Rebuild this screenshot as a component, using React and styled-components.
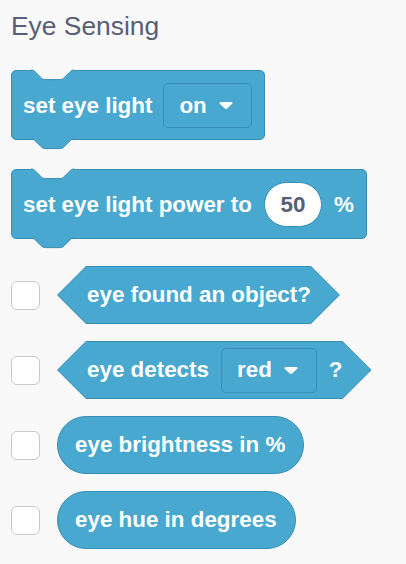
import styled, { createGlobalStyle } from 'styled-components'

const GlobalStyle = createGlobalStyle`
  body {
    margin: 0;
    background: #f9f9f9;
    font-family: "Liberation Sans", Arial, sans-serif;
  }
`

const Palette = styled.div`
  display: flex;
  flex-direction: column;
  align-items: flex-start;
  padding: 11px;
`
const Title = styled.h2`
  margin: 0 0 29px;
  font-size: 26.4px;
  line-height: 30px;
  font-weight: normal;
  color: #575e75;
`
const Stack = styled.div`
  position: relative;
  display: flex;
  align-items: center;
  gap: ${(p) => p.$gap || 12}px;
  padding: 12px 12px 11px 11px;
  margin-bottom: ${(p) => p.$mb || 0}px;
  background: #48a8cf;
  border: 1px solid #3a8db4;
  border-radius: 5px;
`
const Notch = styled.svg`
  position: absolute;
  left: 19px;
  top: -1px;
  overflow: visible;
`
const Tab = styled.svg`
  position: absolute;
  left: 19px;
  top: 100%;
  overflow: visible;
`
const Label = styled.span`
  font-size: 22.4px;
  font-weight: bold;
  color: #fff;
  white-space: nowrap;
  line-height: 26px;
`
const Dropdown = styled.div`
  display: flex;
  align-items: center;
  gap: 12px;
  height: 45px;
  padding: 0 18px 0 15px;
  box-sizing: border-box;
  border: 1px solid #3a8db4;
  border-radius: 5px;
  background: #48a8cf;
`
const NumberInput = styled.div`
  display: flex;
  align-items: center;
  justify-content: center;
  width: 58px;
  height: 45px;
  box-sizing: border-box;
  background: #fff;
  border: 1px solid #3a8db4;
  border-radius: 23px;
  font-size: 22.4px;
  font-weight: bold;
  color: #575e75;
`
const Row = styled.div`
  display: flex;
  align-items: center;
  gap: 17px;
  margin-top: ${(p) => p.$mt || 17}px;
`
const Checkbox = styled.div`
  width: 29px;
  height: 29px;
  box-sizing: border-box;
  background: #fff;
  border: 1px solid #c9c9c9;
  border-radius: 6px;
`
const HexOutline = styled.div`
  display: flex;
  padding: 1px;
  background: #3a8db4;
  clip-path: polygon(29px 0, calc(100% - 29px) 0, 100% 50%, calc(100% - 29px) 100%, 29px 100%, 0 50%);
`
const Hex = styled.div`
  display: flex;
  align-items: center;
  gap: 12px;
  height: 56px;
  padding: 0 28px 0 29px;
  background: #48a8cf;
  clip-path: polygon(28px 0, calc(100% - 28px) 0, 100% 50%, calc(100% - 28px) 100%, 28px 100%, 0 50%);
`
const Pill = styled.div`
  display: flex;
  align-items: center;
  height: 58px;
  box-sizing: border-box;
  padding: 0 18px 0 17px;
  background: #48a8cf;
  border: 1px solid #3a8db4;
  border-radius: 29px;
`

const notchPath =
  'M0,0 c2.4,0 3.6,1.2 4.8,2.4 l4.8,4.8 c1.2,1.2 2.4,2.4 4.8,2.4 h14.4 c2.4,0 3.6,-1.2 4.8,-2.4 l4.8,-4.8 c1.2,-1.2 2.4,-2.4 4.8,-2.4'

function StackShapes() {
  return (
    <>
      <Notch width='44' height='11'>
        <path d={notchPath + ' z'} fill='#f9f9f9' stroke='none' />
        <path d={notchPath} fill='none' stroke='#3a8db4' strokeWidth='1' />
      </Notch>
      <Tab width='44' height='11'>
        <path d={notchPath + ' z'} fill='#48a8cf' stroke='none' />
        <path d={notchPath} fill='none' stroke='#3a8db4' strokeWidth='1' />
      </Tab>
    </>
  )
}

function Caret() {
  return (
    <svg width='14' height='9' viewBox='0 0 14 9'>
      <path
        d='M1.6,1 h10.8 c1,0 1.5,1.1 0.8,1.8 l-5.3,5 c-0.5,0.4 -1.3,0.4 -1.8,0 l-5.3,-5 C0.1,2.1 0.6,1 1.6,1 z'
        fill='#fff'
      />
    </svg>
  )
}

function Menu({ value }) {
  return (
    <Dropdown>
      <Label>{value}</Label>
      <Caret />
    </Dropdown>
  )
}

function App() {
  const reporters = ['eye brightness in %', 'eye hue in degrees']
  return (
    <Palette>
      <GlobalStyle />
      <Title>Eye Sensing</Title>
      <Stack $gap={11} $mb={29}>
        <StackShapes />
        <Label>set eye light</Label>
        <Menu value='on' />
      </Stack>
      <Stack>
        <StackShapes />
        <Label>set eye light power to</Label>
        <NumberInput>50</NumberInput>
        <Label>%</Label>
      </Stack>
      <Row $mt={27}>
        <Checkbox />
        <HexOutline>
          <Hex>
            <Label>eye found an object?</Label>
          </Hex>
        </HexOutline>
      </Row>
      <Row>
        <Checkbox />
        <HexOutline>
          <Hex>
            <Label>eye detects</Label>
            <Menu value='red' />
            <Label>?</Label>
          </Hex>
        </HexOutline>
      </Row>
      {reporters.map((text) => (
        <Row key={text}>
          <Checkbox />
          <Pill>
            <Label>{text}</Label>
          </Pill>
        </Row>
      ))}
    </Palette>
  )
}

export default App
